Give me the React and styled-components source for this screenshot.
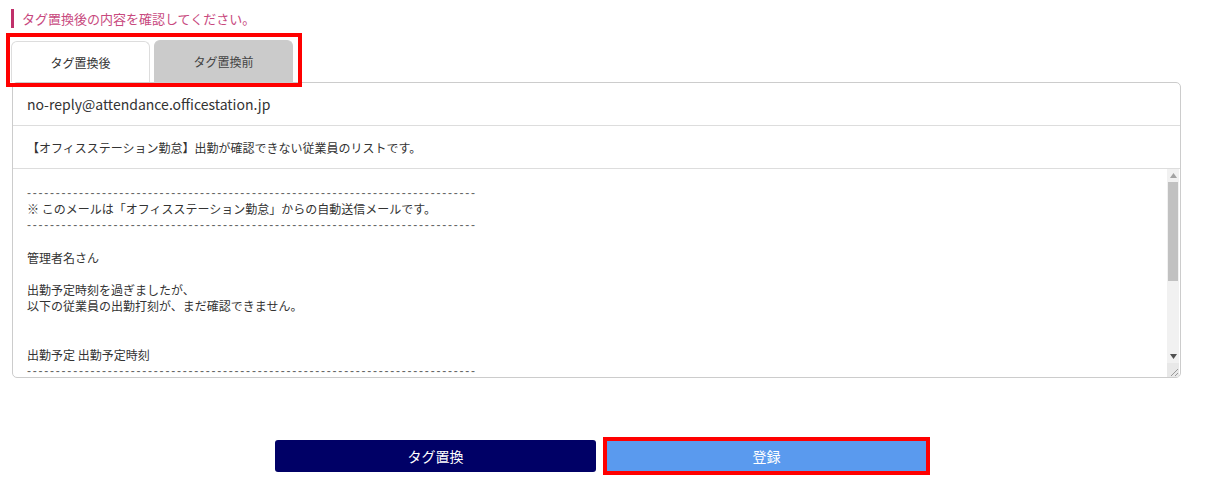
import React from 'react';
import styled, { createGlobalStyle } from 'styled-components';

const GlobalStyle = createGlobalStyle`
  html, body {
    margin: 0;
    padding: 0;
    background: #fff;
  }
  body {
    font-family: 'Noto Sans CJK JP', 'Noto Sans', sans-serif;
    color: #333;
  }
`;

const Page = styled.div`
  width: 1210px;
  height: 490px;
  box-sizing: border-box;
  padding: 9px 29px 0 12px;
`;

const Notice = styled.div`
  border-left: 3px solid #c0306a;
  padding-left: 8px;
  height: 19px;
  line-height: 19px;
  font-size: 13px;
  color: #c8497e;
  margin-left: -1px;
`;

const TabsHighlight = styled.div`
  position: relative;
  z-index: 1;
  display: flex;
  gap: 4px;
  width: 285px;
  margin: 5px 0 -5px -6px;
  padding: 3px 2px 1px 1px;
  border: 4px solid #f00;
`;

const Tab = styled.div`
  box-sizing: border-box;
  width: 139px;
  height: ${props => (props.active ? '41px' : '42px')};
  margin-top: ${props => (props.active ? '1px' : '0')};
  display: flex;
  align-items: center;
  justify-content: center;
  font-size: 12px;
  color: ${props => (props.active ? '#333' : '#444')};
  background: ${props => (props.active ? '#fff' : '#cbcbcb')};
  border: 1px solid ${props => (props.active ? '#ddd' : '#cbcbcb')};
  border-bottom: none;
  border-radius: 6px 6px 0 0;
`;

const Panel = styled.div`
  width: 1169px;
  box-sizing: border-box;
  border: 1px solid #ccc;
  border-radius: 5px;
  overflow: hidden;
`;

const FieldRow = styled.div`
  height: 42px;
  display: flex;
  align-items: center;
  padding-left: 14px;
  border-bottom: 1px solid #ddd;
  font-size: ${props => props.size || 12}px;
  color: #333;
`;

const BodyRow = styled.div`
  display: flex;
  height: 208px;
`;

const BodyText = styled.div`
  flex: 1;
  overflow: hidden;
  padding: 16px 0 0 14px;
  font-size: 12px;
  line-height: 16.2px;
  color: #333;
  white-space: pre;
`;

const Line = styled.div`
  height: 16.2px;
`;

const Dashes = styled.div`
  height: 16.2px;
  font-family: 'Liberation Sans', sans-serif;
  letter-spacing: 1.77px;
  color: #666;
`;

const Scrollbar = styled.div`
  width: 12px;
  margin-right: 1px;
  display: flex;
  flex-direction: column;
  background: #f1f1f1;
`;

const Arrow = styled.div`
  height: 13px;
  display: flex;
  align-items: center;
  justify-content: center;
`;

const Thumb = styled.div`
  height: 99px;
  margin: 0 1px;
  background: #c1c1c1;
`;

const Track = styled.div`
  flex: 1;
`;

const Corner = styled.div`
  height: 14px;
  background: #e8e8e8;
  display: flex;
  align-items: flex-end;
  justify-content: flex-end;
`;

const ButtonRow = styled.div`
  display: flex;
  gap: 10px;
  margin-top: 62px;
  padding-left: 263px;
`;

const Button = styled.button`
  width: 321px;
  height: 32px;
  border: none;
  border-radius: ${props => (props.highlighted ? '0' : '3px')};
  font-family: 'Noto Sans CJK JP', sans-serif;
  font-size: 14px;
  color: #fff;
  background: ${props => (props.primary ? '#5a9aee' : '#000066')};
  outline: ${props => (props.highlighted ? '4px solid #f00' : 'none')};
  outline-offset: -1px;
`;

const dashLine = '-'.repeat(78);

const bodyLines = [
  { dash: true },
  { text: '※ このメールは「オフィスステーション勤怠」からの自動送信メールです。' },
  { dash: true },
  { text: '' },
  { text: '管理者名さん' },
  { text: '' },
  { text: '出勤予定時刻を過ぎましたが、' },
  { text: '以下の従業員の出勤打刻が、まだ確認できません。' },
  { text: '' },
  { text: '' },
  { text: '出勤予定 出勤予定時刻' },
  { dash: true },
];

const TriangleUp = () => (
  <svg width="7" height="5" viewBox="0 0 7 5">
    <path d="M0 5 L3.5 0 L7 5 Z" fill="#a3a3a3" />
  </svg>
);

const TriangleDown = () => (
  <svg width="7" height="5" viewBox="0 0 7 5">
    <path d="M0 0 L7 0 L3.5 5 Z" fill="#505050" />
  </svg>
);

const ResizeGrip = () => (
  <svg width="12" height="12" viewBox="0 0 12 12">
    <path d="M11 4 L4 11 M11 8 L8 11" stroke="#999" strokeWidth="1" />
  </svg>
);

export default function App() {
  return (
    <>
      <GlobalStyle />
      <Page>
        <Notice>タグ置換後の内容を確認してください。</Notice>
        <TabsHighlight>
          <Tab active>タグ置換後</Tab>
          <Tab>タグ置換前</Tab>
        </TabsHighlight>
        <Panel>
          <FieldRow size={14}>no-reply@attendance.officestation.jp</FieldRow>
          <FieldRow>【オフィスステーション勤怠】出勤が確認できない従業員のリストです。</FieldRow>
          <BodyRow>
            <BodyText>
              {bodyLines.map((line, i) =>
                line.dash ? <Dashes key={i}>{dashLine}</Dashes> : <Line key={i}>{line.text}</Line>
              )}
            </BodyText>
            <Scrollbar>
              <Arrow><TriangleUp /></Arrow>
              <Thumb />
              <Track />
              <Arrow><TriangleDown /></Arrow>
              <Corner><ResizeGrip /></Corner>
            </Scrollbar>
          </BodyRow>
        </Panel>
        <ButtonRow>
          <Button>タグ置換</Button>
          <Button primary highlighted>登録</Button>
        </ButtonRow>
      </Page>
    </>
  );
}
